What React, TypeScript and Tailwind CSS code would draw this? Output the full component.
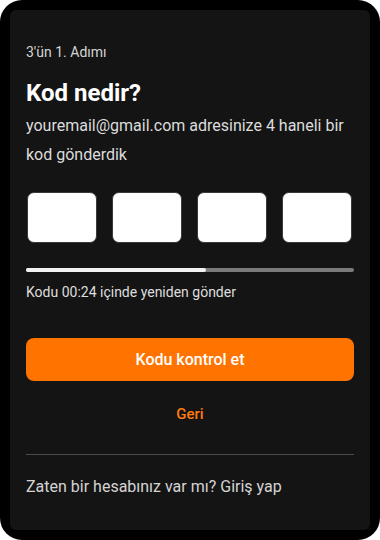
export default function App() {
  return (
    <div className="h-[540px] w-[380px] bg-white" style={{ fontFamily: "Roboto, 'Noto Sans', sans-serif" }}>
      <div className="h-full w-full rounded-[22px] bg-black p-[10px]">
        <div className="flex h-full flex-col rounded-[6px] bg-[#141414] px-[16px] pt-[34px]">
          <p className="text-[14px] leading-[16px] text-[#d4d4d4]">3'ün 1. Adımı</p>
          <h1 className="mt-[19px] text-[24px] font-bold leading-[28px] text-white">Kod nedir?</h1>
          <p className="mt-[4px] text-[16px] leading-[29px] text-[#dcdcdc]">
            youremail@gmail.com adresinize 4 haneli bir kod gönderdik
          </p>
          <div className="mt-[23px] flex gap-[15px] px-[1px]">
            {[0, 1, 2, 3].map((i) => (
              <div key={i} className="h-[51px] w-[70px] rounded-[7px] border border-[#3a3a3a] bg-white" />
            ))}
          </div>
          <div className="mt-[25px] h-[4px] w-full rounded-full bg-[#7a7a7a]">
            <div className="h-full w-[55%] rounded-full bg-[#f2f2f2]" />
          </div>
          <p className="mt-[11px] text-[14px] leading-[18px] text-[#dedede]">Kodu 00:24 içinde yeniden gönder</p>
          <button className="mt-[37px] h-[43px] w-full rounded-[8px] bg-[#ff7300] text-[16px] font-medium text-white">
            Kodu kontrol et
          </button>
          <button className="mt-[23px] text-[15px] font-medium leading-[20px] text-[#ff7a0f]">Geri</button>
          <div className="mt-[30px] h-px w-full bg-[#4a4a4a]" />
          <p className="mt-[22px] text-[16px] leading-[20px] text-[#d4d4d4]">Zaten bir hesabınız var mı? Giriş yap</p>
        </div>
      </div>
    </div>
  );
}
